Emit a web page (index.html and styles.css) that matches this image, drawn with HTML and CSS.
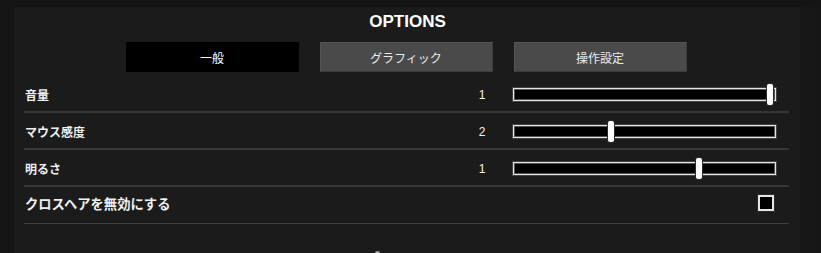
FILE: index.html
```html
<!DOCTYPE html>
<html lang="ja">
<head>
<meta charset="utf-8">
<title>OPTIONS</title>
<link rel="stylesheet" href="styles.css">
</head>
<body>
<div class="page">
  <div class="panel">
    <h1 class="title">OPTIONS</h1>
    <div class="tabs">
      <div class="tab active">一般</div>
      <div class="tab">グラフィック</div>
      <div class="tab">操作設定</div>
    </div>
    <div class="rows">
      <div class="row">
        <span class="label">音量</span>
        <span class="value">1</span>
        <div class="slider"><span class="thumb" style="left:254px"></span></div>
      </div>
      <div class="row">
        <span class="label">マウス感度</span>
        <span class="value">2</span>
        <div class="slider"><span class="thumb" style="left:95px"></span></div>
      </div>
      <div class="row">
        <span class="label">明るさ</span>
        <span class="value">1</span>
        <div class="slider"><span class="thumb" style="left:183px"></span></div>
      </div>
      <div class="row last">
        <span class="label big">クロスヘアを無効にする</span>
        <span class="checkbox"></span>
      </div>
    </div>
    <div class="footer"><span class="footer-mark"></span></div>
  </div>
  <div class="edge"></div>
</div>
</body>
</html>
```

FILE: styles.css
```css
html, body {
  margin: 0;
  padding: 0;
  background: #141414;
  height: 100%;
  overflow: hidden;
}
body {
  font-family: "Liberation Sans", "Noto Sans CJK JP", sans-serif;
  color: #f2f2f2;
}
.page {
  display: flex;
  padding-top: 7px;
  padding-left: 14px;
  height: 246px;
}
.panel {
  width: 786px;
  background: #1b1b1b;
  padding: 5px 11px 0 10px;
  box-sizing: border-box;
}
.edge {
  flex: 1;
  background: linear-gradient(90deg, #181818, #161616);
}
.title {
  margin: 0;
  font-size: 17px;
  line-height: 20px;
  font-weight: bold;
  text-align: center;
  color: #ffffff;
  padding-left: 2px;
}
.tabs {
  display: flex;
  justify-content: center;
  gap: 21px;
  margin-top: 10px;
  margin-bottom: 4px;
  padding-right: 1px;
}
.tab {
  width: 173px;
  height: 30px;
  box-sizing: border-box;
  display: flex;
  align-items: center;
  justify-content: center;
  background: #4a4a4a;
  border: 1px solid #3c3c3c;
  border-top-color: #555;
  border-left-color: #555;
  font-family: "Noto Sans CJK JP", sans-serif;
  font-size: 12px;
  color: #ececec;
}
.tab.active {
  background: #000;
  border-color: #000;
  color: #fff;
}
.row {
  display: flex;
  align-items: center;
  height: 37px;
  box-sizing: border-box;
  padding: 2px 0 0 1px;
  border-bottom: 2px solid #363636;
}
.row.last {
  border-bottom: 1px solid #3f3f3f;
  height: 37px;
  padding-top: 0;
  padding-bottom: 4px;
}
.label {
  flex: 1;
  font-family: "Noto Sans CJK JP", sans-serif;
  font-size: 12px;
  font-weight: bold;
  color: #efefef;
}
.label.big {
  font-size: 13.3px;
}
.value {
  width: 40px;
  margin-right: 11px;
  text-align: center;
  font-size: 12px;
  font-weight: normal;
  color: #f4f4f4;
}
.slider {
  position: relative;
  width: 263px;
  height: 13px;
  box-sizing: border-box;
  margin-right: 13px;
  background: #000;
  border: 1px solid #e4e4e4;
  box-shadow: 0 0 0 1px #444, inset 0 0 0 1px #555;
}
.thumb {
  position: absolute;
  top: -5px;
  width: 6px;
  height: 21px;
  margin-left: -1px;
  background: #ffffff;
  border-radius: 2px;
  box-shadow: 0 0 0 1px #2a2a2a;
}
.checkbox {
  width: 16px;
  height: 16px;
  box-sizing: border-box;
  margin-right: 15px;
  background: #000;
  border: 2px solid #e6e6e6;
  box-shadow: 0 0 0 1px #2b2b2b;
}
.footer {
  display: flex;
  padding-left: 351px;
  margin-top: 27px;
}
.footer-mark {
  width: 5px;
  height: 3px;
  background: #9a9a9a;
  border-radius: 2px 2px 0 0;
}
```
